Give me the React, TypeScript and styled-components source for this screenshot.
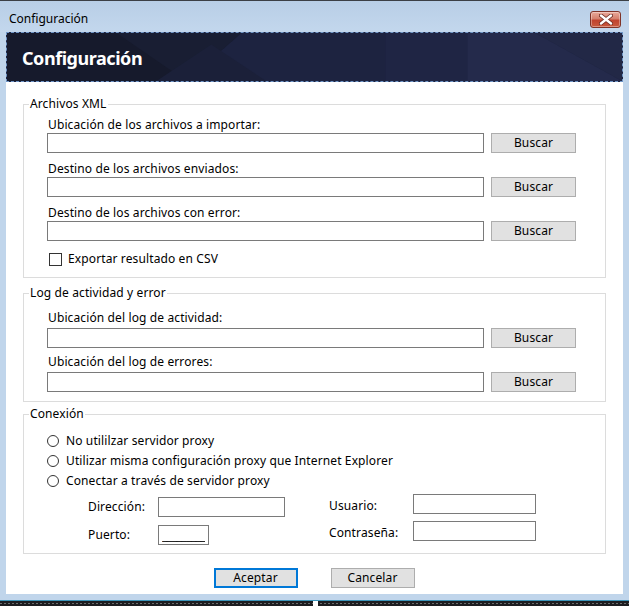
import React from "react";
import styled, { createGlobalStyle } from "styled-components";

const Global = createGlobalStyle`
  html, body { margin: 0; padding: 0; background: #c0d5eb; }
  body {
    font-family: "Noto Sans", "Open Sans", sans-serif;
    font-size: 12px;
    letter-spacing: 0.12px;
    color: #000;
    overflow: hidden;
  }
  * { box-sizing: border-box; }
`;

const Window = styled.div`
  width: 629px;
  height: 606px;
  display: flex;
  flex-direction: column;
  background: #c0d5eb;
  border-top: 1px solid #3b3f45;
`;

const TitleBar = styled.div`
  height: 31px;
  flex: none;
  display: flex;
  align-items: center;
  justify-content: space-between;
  padding: 5px 8px 0 9px;
  background: linear-gradient(#b8cee6, #c3d7ed);
`;

const TitleText = styled.span`
  font-size: 12px;
  line-height: 16px;
  color: #000;
  letter-spacing: 0;
`;

const CloseButton = styled.div`
  width: 31px;
  height: 17px;
  border: 1px solid #7f3328;
  border-radius: 3px;
  background: linear-gradient(#e9a99a 0%, #d5806d 45%, #c0432f 55%, #c95a3f 100%);
  display: flex;
  align-items: center;
  justify-content: center;
  box-shadow: inset 0 0 0 1px rgba(255, 255, 255, 0.35);
`;

const Client = styled.div`
  flex: 1;
  margin: 0 6px;
  background: #fff;
  display: flex;
  flex-direction: column;
`;

const Header = styled.div`
  height: 50px;
  flex: none;
  position: relative;
  overflow: hidden;
  background: #1d2340;
  border: 1px dashed #6f95c6;
  display: flex;
  align-items: center;
  padding: 2px 0 0 15px;
`;

const HeaderArt = styled.svg`
  position: absolute;
  inset: 0;
  width: 100%;
  height: 100%;
`;

const HeaderTitle = styled.h1`
  position: relative;
  margin: 0;
  font-family: "Noto Sans", "Open Sans", sans-serif;
  font-size: 18px;
  font-weight: 700;
  line-height: 22px;
  color: #fff;
  letter-spacing: -0.45px;
`;

const Body = styled.div`
  flex: 1;
  display: flex;
  flex-direction: column;
  padding: 0 17px;
`;

const Group = styled.fieldset<{ $mt: number }>`
  margin: ${(p) => p.$mt}px 0 0;
  padding: 0;
  border: 1px solid #dcdcdc;
  min-width: 0;
`;

const Legend = styled.legend`
  margin-left: 5px;
  padding: 0 1px;
  font-size: 12px;
  line-height: 16px;
`;

const GroupBody = styled.div<{ $pt: number; $pb: number; $gap: number }>`
  display: flex;
  flex-direction: column;
  gap: ${(p) => p.$gap}px;
  padding: ${(p) => p.$pt}px 0 ${(p) => p.$pb}px 23px;
`;

const Field = styled.div<{ $lg?: number }>`
  display: flex;
  flex-direction: column;
  gap: ${(p) => p.$lg ?? 0}px;
`;

const FieldLabel = styled.label`
  line-height: 16px;
  padding-left: 1px;
`;

const PathRow = styled.div`
  display: flex;
  gap: 7px;
`;

const TextBox = styled.input<{ $w: number }>`
  width: ${(p) => p.$w}px;
  height: 20px;
  margin: 0;
  padding: 0 3px;
  border: 1px solid #7a7a7a;
  background: #fff;
  font-family: inherit;
  font-size: 12px;
  line-height: 18px;
  color: #000;
  outline: none;
  letter-spacing: -0.5px;
`;

const Button = styled.button<{ $w: number; $default?: boolean }>`
  width: ${(p) => p.$w}px;
  height: 20px;
  margin: 0;
  padding: 0;
  background: #e1e1e1;
  border: ${(p) => (p.$default ? "2px solid #0078d7" : "1px solid #adadad")};
  font-family: inherit;
  font-size: 12px;
  line-height: 16px;
  letter-spacing: 0.12px;
  color: #000;
`;

const CheckRow = styled.label`
  display: flex;
  align-items: center;
  gap: 6px;
  padding-left: 2px;
  margin-top: 2px;
  line-height: 16px;
`;

const CheckBox = styled.span`
  width: 13px;
  height: 13px;
  border: 1px solid #333;
  background: #fff;
`;

const RadioRow = styled.label`
  display: flex;
  align-items: center;
  gap: 7px;
  height: 20px;
  line-height: 16px;
`;

const RadioDot = styled.span`
  width: 12px;
  height: 12px;
  border: 1px solid #333;
  border-radius: 50%;
  background: #fff;
`;

const Radios = styled.div`
  display: flex;
  flex-direction: column;
`;

const Proxy = styled.div`
  display: flex;
  align-items: flex-start;
  gap: 44px;
  margin-left: 41px;
  margin-top: 3px;
`;

const ProxyGrid = styled.div<{ $cols: string; $gap: number; $mt: number; $labelAlign: string }>`
  display: grid;
  grid-template-columns: ${(p) => p.$cols};
  grid-auto-rows: 20px;
  row-gap: ${(p) => p.$gap}px;
  margin-top: ${(p) => p.$mt}px;
  & > span {
    line-height: 16px;
    align-self: ${(p) => p.$labelAlign};
  }
`;

const Footer = styled.div`
  display: flex;
  justify-content: center;
  gap: 33px;
  margin-top: 14px;
  padding-right: 1px;
`;

const BottomFrame = styled.div`
  height: 6px;
  flex: none;
`;

const Taskbar = styled.div`
  height: 6px;
  flex: none;
  border-top: 1px solid #3b95bb;
  background-color: #1c1d20;
  background-image: repeating-linear-gradient(90deg, #6d6d6d 0 2px, transparent 2px 4px);
  background-size: 100% 1px;
  background-position: 0 2px;
  background-repeat: no-repeat;
  padding-left: 313px;
`;

const TaskMark = styled.div`
  width: 5px;
  height: 5px;
  background: #fff;
`;

const Path = ({ label, lg }: { label: string; lg?: number }) => (
  <Field $lg={lg}>
    <FieldLabel>{label}</FieldLabel>
    <PathRow>
      <TextBox $w={437} readOnly />
      <Button $w={85}>Buscar</Button>
    </PathRow>
  </Field>
);

export default function App() {
  return (
    <>
      <Global />
      <Window>
        <TitleBar>
          <TitleText>Configuración</TitleText>
          <CloseButton>
            <svg width="14" height="11" viewBox="0 0 14 11">
              <path
                d="M2 1.5 L12 9.5 M12 1.5 L2 9.5"
                stroke="#6b2a20"
                strokeWidth="4"
                strokeLinecap="round"
              />
              <path
                d="M2 1.5 L12 9.5 M12 1.5 L2 9.5"
                stroke="#fff"
                strokeWidth="2.4"
                strokeLinecap="round"
              />
            </svg>
          </CloseButton>
        </TitleBar>
        <Client>
          <Header>
            <HeaderArt viewBox="0 0 617 50" preserveAspectRatio="none">
              <polygon points="0,0 235,0 180,50 0,50" fill="#161a2c" />
              <polygon points="110,0 235,0 180,50" fill="#191e33" />
              <polygon points="150,50 205,12 260,50" fill="#1b2039" />
              <polygon points="380,0 462,0 462,50 380,50" fill="#1f2544" />
              <polygon points="462,0 530,0 617,50 462,50" fill="#242a4b" />
              <polygon points="530,0 617,0 617,50" fill="#222846" />
            </HeaderArt>
            <HeaderTitle>Configuración</HeaderTitle>
          </Header>
          <Body>
            <Group $mt={14}>
              <Legend>Archivos XML</Legend>
              <GroupBody $pt={5} $pb={10} $gap={8}>
                <Path label="Ubicación de los archivos a importar:" />
                <Path label="Destino de los archivos enviados:" />
                <Path label="Destino de los archivos con error:" />
                <CheckRow>
                  <CheckBox />
                  Exportar resultado en CSV
                </CheckRow>
              </GroupBody>
            </Group>
            <Group $mt={7}>
              <Legend>Log de actividad y error</Legend>
              <GroupBody $pt={9} $pb={9} $gap={6}>
                <Path label="Ubicación del log de actividad:" lg={2} />
                <Path label="Ubicación del log de errores:" lg={2} />
              </GroupBody>
            </Group>
            <Group $mt={4}>
              <Legend>Conexión</Legend>
              <GroupBody $pt={9} $pb={8} $gap={0}>
                <Radios>
                  <RadioRow>
                    <RadioDot />
                    No utililzar servidor proxy
                  </RadioRow>
                  <RadioRow>
                    <RadioDot />
                    Utilizar misma configuración proxy que Internet Explorer
                  </RadioRow>
                  <RadioRow>
                    <RadioDot />
                    Conectar a través de servidor proxy
                  </RadioRow>
                </Radios>
                <Proxy>
                  <ProxyGrid $cols="70px auto" $gap={8} $mt={3} $labelAlign="center">
                    <span>Dirección:</span>
                    <TextBox $w={127} readOnly />
                    <span>Puerto:</span>
                    <TextBox $w={51} readOnly defaultValue="_________" />
                  </ProxyGrid>
                  <ProxyGrid $cols="84px 123px" $gap={7} $mt={0} $labelAlign="end">
                    <span>Usuario:</span>
                    <TextBox $w={123} readOnly />
                    <span>Contraseña:</span>
                    <TextBox $w={123} readOnly />
                  </ProxyGrid>
                </Proxy>
              </GroupBody>
            </Group>
            <Footer>
              <Button $w={84} $default>
                Aceptar
              </Button>
              <Button $w={84}>Cancelar</Button>
            </Footer>
          </Body>
        </Client>
        <BottomFrame />
        <Taskbar>
          <TaskMark />
        </Taskbar>
      </Window>
    </>
  );
}
